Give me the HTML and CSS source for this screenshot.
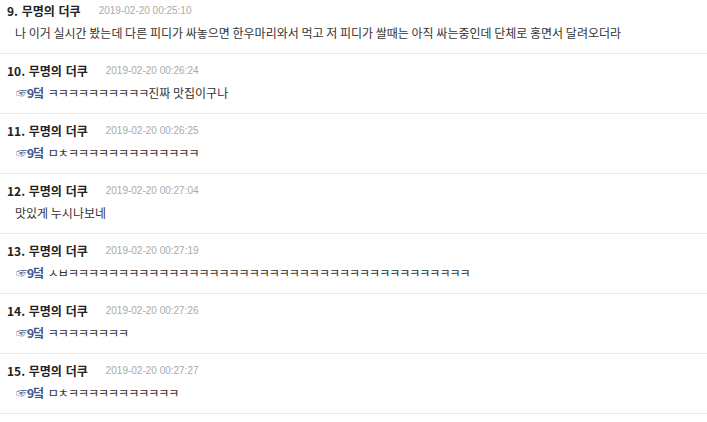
FILE: index.html
```html
<!DOCTYPE html>
<html>
<head>
  <meta charset='utf-8'>
  <title>댓글</title>
  <meta name='viewport' content='width=device-width, initial-scale=1'>
  <link rel="stylesheet" href="styles.css">
</head>
<body>
  <ul class="comments">
    <li class="comment">
      <div class="meta"><span class="name">9. 무명의 더쿠</span><span class="date">2019-02-20 00:25:10</span></div>
      <p class="text">나 이거 실시간 봤는데 다른 피디가 싸놓으면 한우마리와서 먹고 저 피디가 쌀때는 아직 싸는중인데 단체로 홍면서 달려오더라</p>
    </li>
    <li class="comment">
      <div class="meta"><span class="name">10. 무명의 더쿠</span><span class="date">2019-02-20 00:26:24</span></div>
      <p class="text"><a class="reply" href="#">☞9덬</a> <span class="jamo">ㅋㅋㅋㅋㅋㅋㅋㅋㅋㅋ</span>진짜 맛집이구나</p>
    </li>
    <li class="comment">
      <div class="meta"><span class="name">11. 무명의 더쿠</span><span class="date">2019-02-20 00:26:25</span></div>
      <p class="text"><a class="reply" href="#">☞9덬</a> <span class="jamo">ㅁㅊㅋㅋㅋㅋㅋㅋㅋㅋㅋㅋㅋㅋㅋ</span></p>
    </li>
    <li class="comment">
      <div class="meta"><span class="name">12. 무명의 더쿠</span><span class="date">2019-02-20 00:27:04</span></div>
      <p class="text">맛있게 누시나보네</p>
    </li>
    <li class="comment">
      <div class="meta"><span class="name">13. 무명의 더쿠</span><span class="date">2019-02-20 00:27:19</span></div>
      <p class="text"><a class="reply" href="#">☞9덬</a> <span class="jamo">ㅅㅂㅋㅋㅋㅋㅋㅋㅋㅋㅋㅋㅋㅋㅋㅋㅋㅋㅋㅋㅋㅋㅋㅋㅋㅋㅋㅋㅋㅋㅋㅋㅋㅋㅋㅋㅋㅋㅋㅋㅋㅋ</span></p>
    </li>
    <li class="comment">
      <div class="meta"><span class="name">14. 무명의 더쿠</span><span class="date">2019-02-20 00:27:26</span></div>
      <p class="text"><a class="reply" href="#">☞9덬</a> <span class="jamo">ㅋㅋㅋㅋㅋㅋㅋㅋ</span></p>
    </li>
    <li class="comment">
      <div class="meta"><span class="name">15. 무명의 더쿠</span><span class="date">2019-02-20 00:27:27</span></div>
      <p class="text"><a class="reply" href="#">☞9덬</a> <span class="jamo">ㅁㅊㅋㅋㅋㅋㅋㅋㅋㅋㅋㅋㅋ</span></p>
    </li>
  </ul>
</body>
</html>
```

FILE: styles.css
```css
*, *:before, *:after {
  box-sizing: inherit;
}
html {
  box-sizing: border-box;
}
html, body {
  background: #fff;
  font-family: "Noto Sans CJK KR", "Liberation Sans", sans-serif;
  font-size: 12px;
  color: #333;
  margin: 0;
  padding: 0;
  overflow: hidden;
}
.comments {
  list-style: none;
  margin: -6px 0 0;
  padding: 0;
}
.comment {
  height: 60px;
  padding: 9px 0 0;
  border-bottom: 1px solid #e8e8e8;
}
.meta {
  display: flex;
  align-items: center;
  height: 14px;
  padding-left: 7px;
}
.name {
  font-size: 12px;
  font-weight: bold;
  color: #222;
  word-spacing: 1px;
}
.date {
  margin-left: 18px;
  font-family: "Liberation Sans", sans-serif;
  font-size: 10px;
  color: #aaa;
}
.text {
  margin: 7px 0 0;
  padding-left: 15px;
  line-height: 18px;
  white-space: nowrap;
}
.jamo {
  letter-spacing: -1px;
}
.reply {
  color: #3b5a8c;
  font-weight: bold;
  text-decoration: none;
  font-size: 12px;
  margin-left: 1px;
  margin-right: 2px;
  letter-spacing: -1px;
}
```
